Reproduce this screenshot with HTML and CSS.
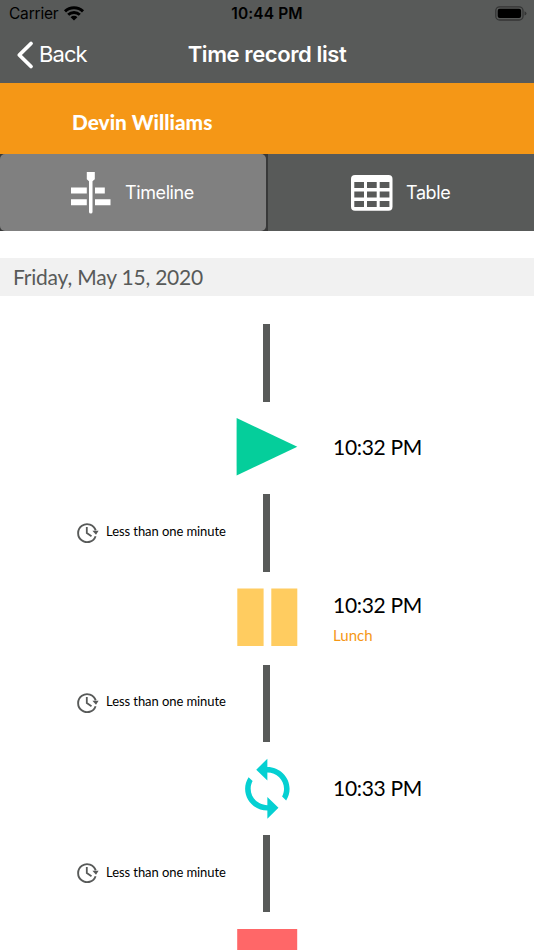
FILE: index.html
```html
<!DOCTYPE html>
<html lang="en">
<head>
<meta charset="utf-8">
<title>Time record list</title>
<link rel="stylesheet" href="styles.css">
</head>
<body>
<svg class="defs" width="0" height="0" aria-hidden="true">
  <symbol id="clock" viewBox="0 0 22 20">
    <path d="M18.600 13.200A9 9 0 1 1 18.700 7.400" fill="none" stroke="#585a59" stroke-width="1.900"/>
    <path d="M9.800 4v6l4.700 3.200" fill="none" stroke="#585a59" stroke-width="1.800"/>
    <path d="M15.400 7.700h6.200l-2.600 4z" fill="#585a59"/>
  </symbol>
</svg>
<div class="screen">
  <header class="header">
    <div class="status">
      <div class="carrier"><span>Carrier</span>
        <svg class="wifi" viewBox="0 0 20 15"><g fill="none" stroke="#000" stroke-width="2.900"><path d="M1 5.400a12.800 12.800 0 0 1 18 0"/><path d="M4.200 8.800a8.300 8.300 0 0 1 11.600 0"/></g><path d="M10 14.600l-3.400-3.400a4.800 4.800 0 0 1 6.800 0z"/></svg>
      </div>
      <span class="clock-time">10:44 PM</span>
      <svg class="battery" viewBox="0 0 32 16"><rect x=".8" y=".8" width="27.2" height="13.2" rx="3.8" fill="none" stroke="#343535" stroke-width="1.3"/><rect x="2.7" y="2.7" width="23.4" height="9.4" rx="2"/><path d="M29.5 5.2q2 .8 2 2.2t-2 2.2z" fill="#343535"/></svg>
    </div>
    <nav class="nav">
      <a class="back"><svg class="chevron" viewBox="0 0 16 28"><path d="M14 2.500L2.300 14l11.700 11.500" fill="none" stroke="#fff" stroke-width="3.800" stroke-linecap="round" stroke-linejoin="round"/></svg><span>Back</span></a>
      <h1>Time record list</h1>
    </nav>
  </header>
  <div class="person"><span>Devin Williams</span></div>
  <div class="tabs">
    <div class="tab active">
      <svg class="timeline-icon" viewBox="0 0 40 42"><g fill="#fff"><path d="M15.800 0h8v7.200l-2.300 2V40q0 1.500-1.700 1.500T18 40V9.200l-2.200-2z"/><path d="M0 15.400h15.800v6H0zM24 15.400h9.800v6H24zM0 27.300h15.800v6H0zM24 27.300h15.500v6H24z"/></g></svg>
      <span>Timeline</span>
    </div>
    <div class="tab">
      <svg class="table-icon" viewBox="0 0 42 36"><rect width="41.500" height="35.800" rx="4" fill="#fff"/><g fill="#585a59"><path d="M3.300 7h9.700v6H3.300zM16 7h9.700v6H16zM28.700 7h9.700v6h-9.700zM3.300 16.500h9.700v6H3.300zM16 16.500h9.700v6H16zM28.700 16.500h9.700v6h-9.700zM3.300 26h9.700v6H3.300zM16 26h9.700v6H16zM28.700 26h9.700v6h-9.700z"/></g></svg>
      <span>Table</span>
    </div>
  </div>
  <h2 class="date">Friday, May 15, 2020</h2>
  <main class="timeline">
    <div class="link"><div class="duration"></div><i class="bar"></i></div>
    <div class="event"><svg class="mark" viewBox="0 0 60 58"><path d="M-.4 0l60.700 28.700L-.4 57.500z" fill="#05ce9b"/></svg><div class="info"><span class="time">10:32 PM</span></div></div>
    <div class="link"><div class="duration"><svg class="clock"><use href="#clock"/></svg><span>Less than one minute</span></div><i class="bar"></i></div>
    <div class="event"><svg class="mark" viewBox="0 0 60 58"><path d="M.3-.4h26.300v57.300H.3zM34.300-.4h26v57.300h-26z" fill="#ffcc60"/></svg><div class="info noted"><span class="time">10:32 PM</span><span class="note">Lunch</span></div></div>
    <div class="link"><div class="duration"><svg class="clock"><use href="#clock"/></svg><span>Less than one minute</span></div><i class="bar"></i></div>
    <div class="event"><svg class="mark" viewBox="0 0 60 58"><path transform="translate(-3 -3) scale(2.780 2.730)" fill="#05d0d2" d="M12 4V1L8 5l4 4V6c3.310 0 6 2.690 6 6 0 1.010-.25 1.970-.7 2.800l1.460 1.460C19.540 15.030 20 13.570 20 12c0-4.420-3.580-8-8-8zm0 14c-3.310 0-6-2.690-6-6 0-1.010.25-1.970.7-2.800L5.240 7.740C4.460 8.970 4 10.430 4 12c0 4.420 3.580 8 8 8v3l4-4-4-4v3z"/></svg><div class="info"><span class="time">10:33 PM</span></div></div>
    <div class="link"><div class="duration"><svg class="clock"><use href="#clock"/></svg><span>Less than one minute</span></div><i class="bar"></i></div>
    <div class="event"><svg class="mark" viewBox="0 0 60 58"><path d="M.2 0h60v58H.2z" fill="#ff6768"/></svg></div>
  </main>
</div>
</body>
</html>
```
FILE: styles.css
```css
* { box-sizing: border-box; }
body { margin: 0; background: #fff; font-family: Lato, sans-serif; }
svg { display: block; flex: none; overflow: visible; }
.defs { position: absolute; }
h1, h2 { margin: 0; font-weight: 400; }
.screen { width: 534px; height: 950px; overflow: hidden; }
.header { height: 83px; background: #585a59; font-family: Inter, sans-serif; }
.status { height: 28px; display: grid; grid-template-columns: 1fr auto 1fr; align-items: center; padding: 0 7px 0 9px; color: #000; font-size: 15.5px; line-height: 28px; }
.carrier { display: flex; align-items: center; gap: 6px; letter-spacing: -.2px; }
.wifi { width: 20px; height: 15px; margin-top: -2px; }
.clock-time { font-weight: 600; letter-spacing: .1px; margin-left: -2px; }
.battery { width: 32px; height: 16px; justify-self: end; margin-top: -1px; }
.nav { height: 53px; display: grid; grid-template-columns: 1fr auto 1fr; align-items: center; padding: 0 17px; color: #fff; font-size: 22px; }
.back { display: flex; align-items: center; gap: 6px; letter-spacing: -.9px; }
.back span, .nav h1 { margin-top: -2px; }
.chevron { width: 16px; height: 28px; }
.nav h1 { font-size: 22px; font-weight: 600; letter-spacing: -.4px; }
.person { height: 71px; padding: 25px 0 0 72px; background: #f59716; color: #fff; font-size: 20.8px; line-height: 28px; font-weight: 900; }
.tabs { height: 77px; display: grid; grid-template-columns: 266px 266px; gap: 2px; background: #383939; font-family: Inter, sans-serif; color: #fff; font-size: 18px; letter-spacing: -.4px; }
.tab { display: flex; align-items: center; background: #585a59; padding-left: 83px; gap: 13px; }
.tab.active { background: #808080; border-radius: 5px; padding-left: 71px; gap: 14px; }
.timeline-icon { width: 40px; height: 42px; }
.table-icon { width: 42px; height: 36px; }
.date { height: 38px; margin-top: 27px; padding-left: 13px; background: #f1f1f1; color: #585a59; font-size: 21px; line-height: 38px; letter-spacing: -.2px; }
.timeline { padding-top: 28px; }
.link { height: 77.5px; display: grid; grid-template-columns: 263px 6.6px; }
.bar { background: #585a59; }
.duration { display: flex; align-items: center; padding-left: 77px; font-size: 13px; letter-spacing: -.07px; color: #000; gap: 7px; }
.duration span { margin-top: -4px; }
.clock { width: 22px; height: 20px; margin-top: -1px; }
.event { height: 92.83px; display: grid; grid-template-columns: 60px 1fr; column-gap: 36px; padding-left: 237px; align-items: center; }
.mark { width: 60px; height: 58px; margin-top: -1px; }
.info { display: flex; flex-direction: column; color: #000; margin-top: -1px; }
.info.noted { margin-top: 3px; }
.time { font-size: 21px; line-height: 30px; letter-spacing: -.3px; }
.note { font-size: 15px; line-height: 30px; color: #f59716; }
```
